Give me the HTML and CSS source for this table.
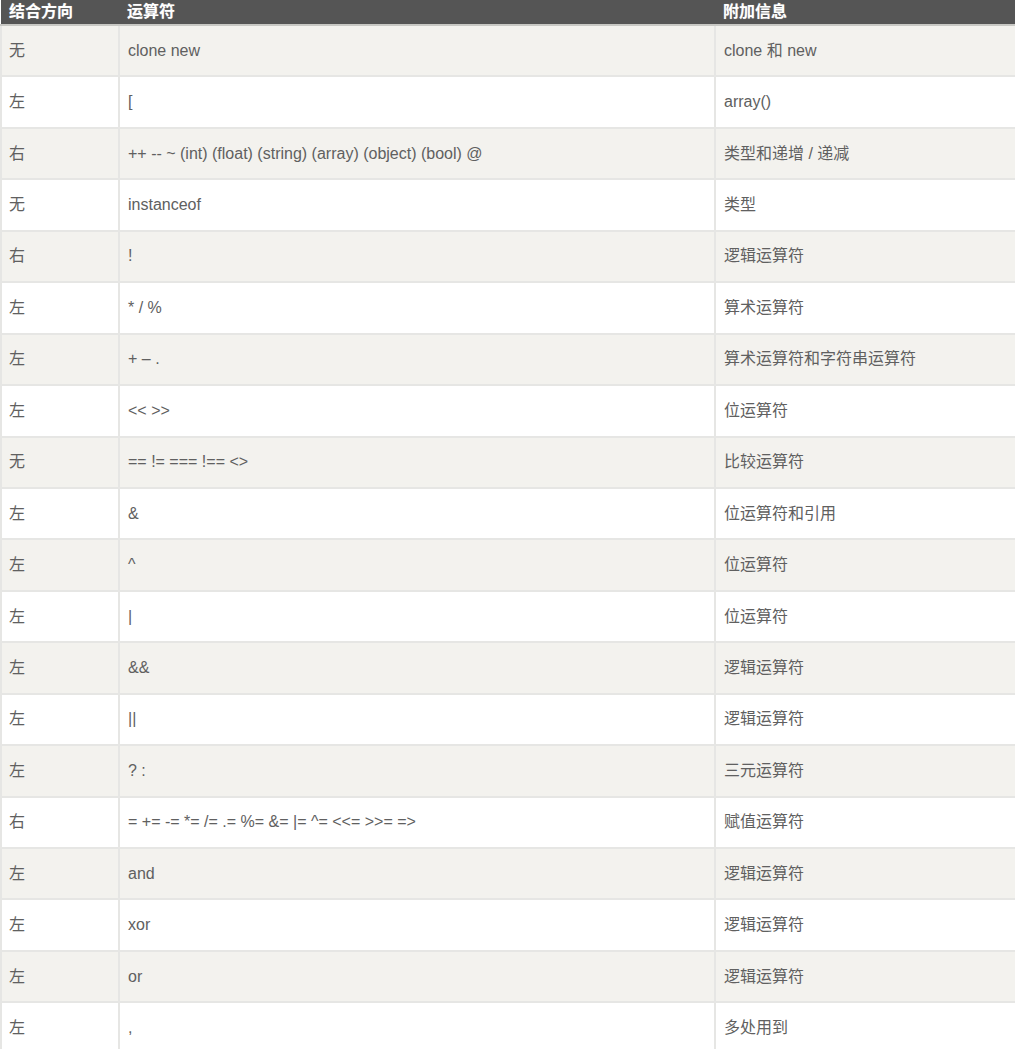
FILE: index.html
```html
<!DOCTYPE html>
<html lang="zh">
<head>
<meta charset="utf-8">
<title>运算符优先级</title>
<link rel="stylesheet" href="styles.css">
</head>
<body>
<table class="ops">
  <thead>
    <tr class="head">
      <th class="c1">结合方向</th>
      <th class="c2">运算符</th>
      <th class="c3">附加信息</th>
    </tr>
  </thead>
  <tbody>
    <tr><td>无</td><td>clone new</td><td>clone 和 new</td></tr>
    <tr><td>左</td><td>[</td><td>array()</td></tr>
    <tr><td>右</td><td>++ -- ~ (int) (float) (string) (array) (object) (bool) @</td><td>类型和递增 / 递减</td></tr>
    <tr><td>无</td><td>instanceof</td><td>类型</td></tr>
    <tr><td>右</td><td>!</td><td>逻辑运算符</td></tr>
    <tr><td>左</td><td>* / %</td><td>算术运算符</td></tr>
    <tr><td>左</td><td>+ – .</td><td>算术运算符和字符串运算符</td></tr>
    <tr><td>左</td><td>&lt;&lt; &gt;&gt;</td><td>位运算符</td></tr>
    <tr><td>无</td><td>== != === !== &lt;&gt;</td><td>比较运算符</td></tr>
    <tr><td>左</td><td>&amp;</td><td>位运算符和引用</td></tr>
    <tr><td>左</td><td>^</td><td>位运算符</td></tr>
    <tr><td>左</td><td>|</td><td>位运算符</td></tr>
    <tr><td>左</td><td>&amp;&amp;</td><td>逻辑运算符</td></tr>
    <tr><td>左</td><td>||</td><td>逻辑运算符</td></tr>
    <tr><td>左</td><td>? :</td><td>三元运算符</td></tr>
    <tr><td>右</td><td>= += -= *= /= .= %= &amp;= |= ^= &lt;&lt;= &gt;&gt;= =&gt;</td><td>赋值运算符</td></tr>
    <tr><td>左</td><td>and</td><td>逻辑运算符</td></tr>
    <tr><td>左</td><td>xor</td><td>逻辑运算符</td></tr>
    <tr><td>左</td><td>or</td><td>逻辑运算符</td></tr>
    <tr><td>左</td><td>,</td><td>多处用到</td></tr>
  </tbody>
</table>
</body>
</html>
```
FILE: styles.css
```css
html, body {
  margin: 0;
  padding: 0;
  background: #ffffff;
}

.ops {
  border-collapse: collapse;
  table-layout: fixed;
  width: 1040px;
  font-family: "Liberation Sans", "Noto Sans CJK SC", sans-serif;
  font-size: 16px;
  color: #606060;
}

.ops .c1 { width: 118px; }
.ops .c2 { width: 596px; }
.ops .c3 { width: auto; }

.head th {
  background: #555555;
  color: #ffffff;
  font-weight: bold;
  text-align: left;
  height: 25px;
  padding: 0 0 0 8px;
  line-height: 22px;
  border-bottom: 2px solid #c8c8c4;
  text-shadow: 0 0 1px rgba(255,255,255,0.4);
  box-sizing: border-box;
}

.ops td {
  height: 51.45px;
  padding: 0 0 0 8px;
  border: 2px solid #e6e6e4;
  vertical-align: middle;
  box-sizing: border-box;
  line-height: 20px;
}

.ops td:first-child {
  padding-left: 7px;
}

.ops tbody tr:nth-child(odd) td {
  background: #f3f2ee;
}

.ops tbody tr:nth-child(even) td {
  background: #ffffff;
}
```
